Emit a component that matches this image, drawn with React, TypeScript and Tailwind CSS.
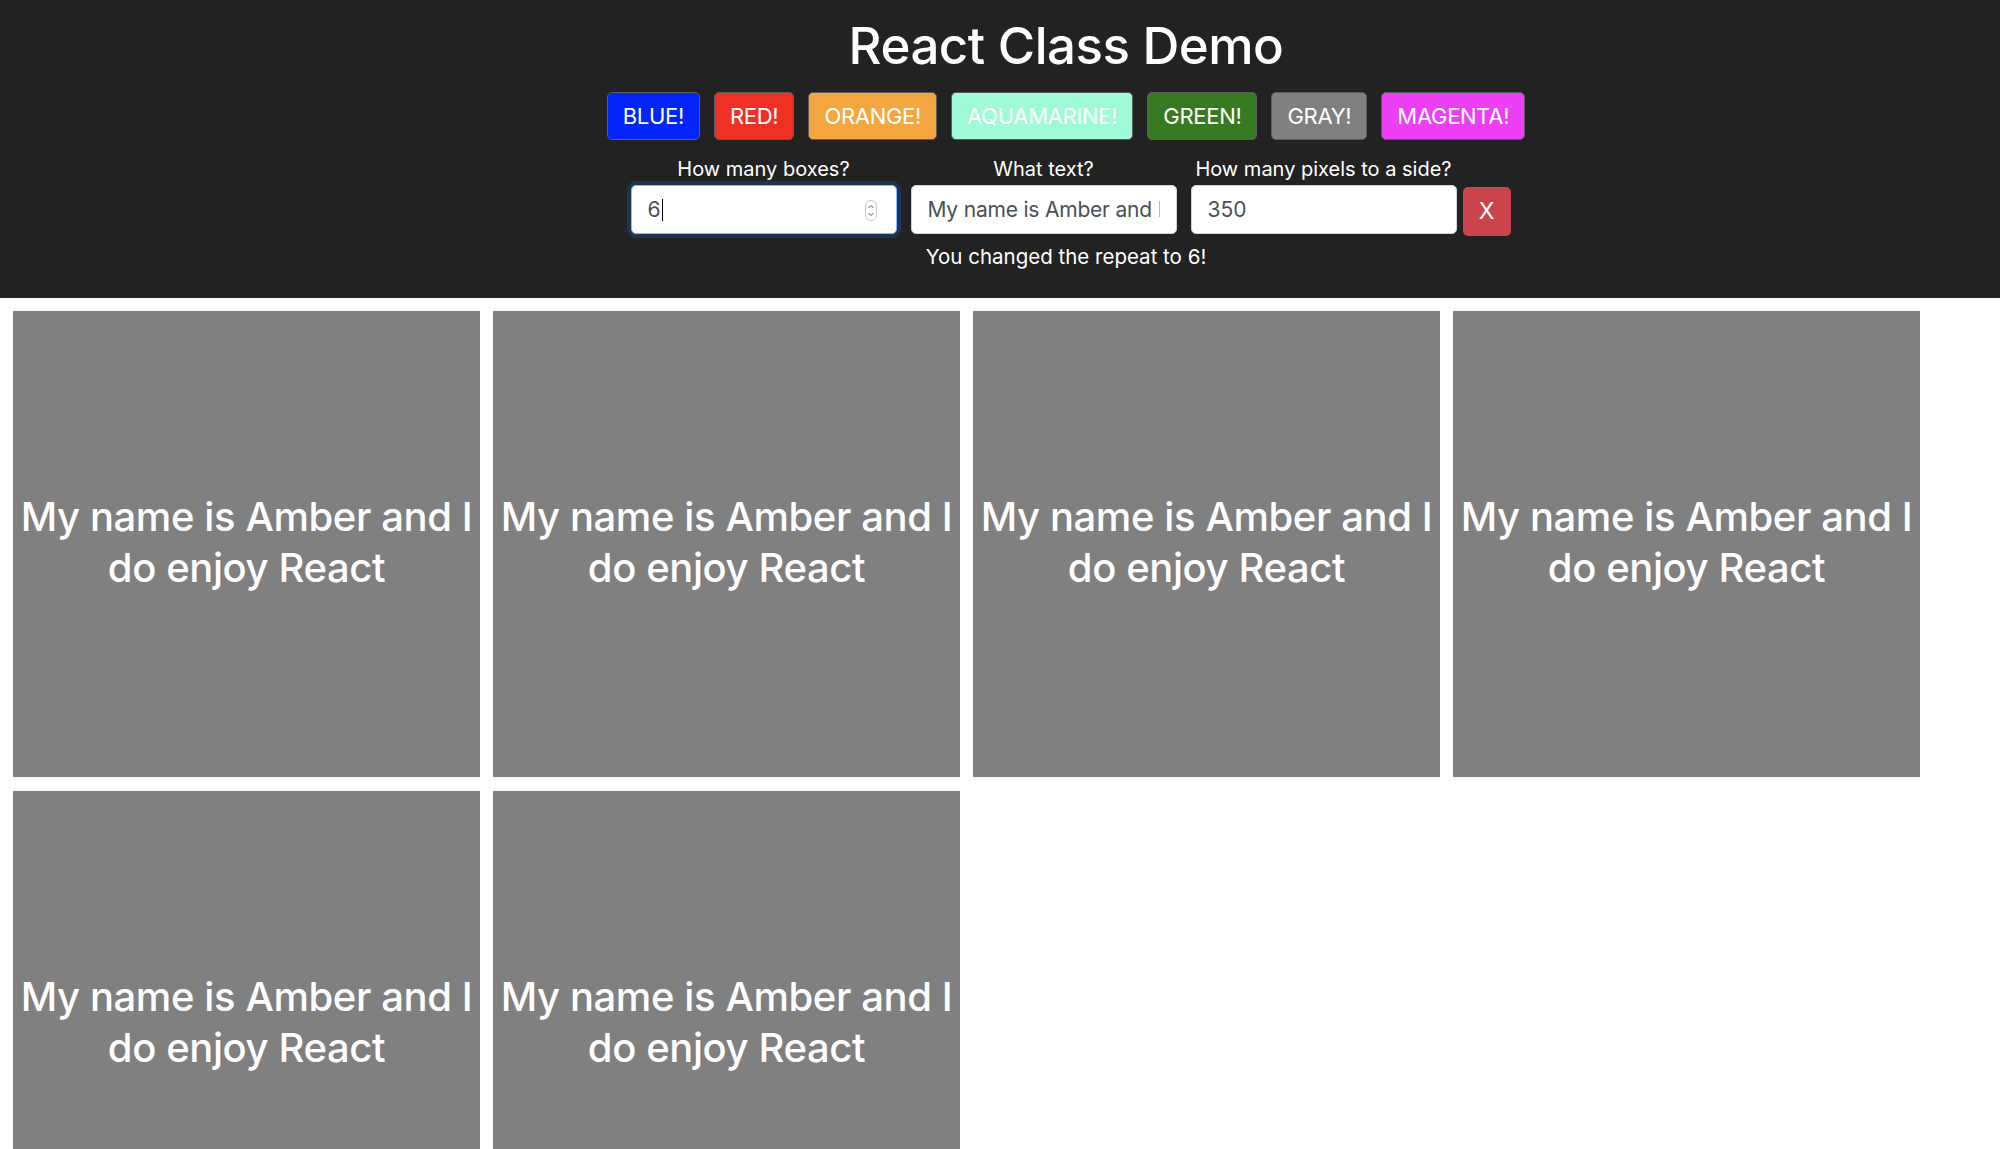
import React from "react";

const buttons = [
  { label: "BLUE!", cls: "bg-[#0324fb]" },
  { label: "RED!", cls: "bg-[#ee3124]" },
  { label: "ORANGE!", cls: "bg-[#f4a63f]" },
  { label: "AQUAMARINE!", cls: "bg-[#9ffbd7]" },
  { label: "GREEN!", cls: "bg-[#387a22]" },
  { label: "GRAY!", cls: "bg-[#808080]" },
  { label: "MAGENTA!", cls: "bg-[#eb3ef5]" },
];

const TEXT = "My name is Amber and I do enjoy React";

function Spinner() {
  return (
    <svg width="12" height="21" viewBox="0 0 12 21" className="absolute right-[19px] top-[14px]">
      <rect x="0.5" y="0.5" width="11" height="20" rx="5.5" fill="#fff" stroke="#c8c8c8" />
      <path d="M3.5 8 L6 5.5 L8.5 8" fill="none" stroke="#555" strokeWidth="1" />
      <path d="M3.5 13 L6 15.5 L8.5 13" fill="none" stroke="#555" strokeWidth="1" />
    </svg>
  );
}

export default function App() {
  return (
    <div className="min-h-screen bg-white font-['Inter',sans-serif]">
      <header className="bg-[#222222] pl-[132px] pt-[15px] pb-[29px] text-center text-white">
        <h1 className="text-[51px] leading-[62px] font-medium tracking-[-0.5px]">React Class Demo</h1>
        <div className="mt-[15px] flex justify-center gap-[14px]">
          {buttons.map((b) => (
            <button
              key={b.label}
              className={`${b.cls} h-[48px] rounded-[5px] border border-[#5c5c5c] px-[15px] text-[22px] leading-[27px] tracking-[-0.3px] text-white`}
            >
              {b.label}
            </button>
          ))}
        </div>
        <div className="mt-[17px] flex items-end justify-center gap-[14px] pl-[9px]">
          <div className="flex w-[266px] flex-col items-center">
            <label className="text-[20px] leading-[25px] whitespace-nowrap">How many boxes?</label>
            <div className="relative mt-[3px] flex h-[49px] w-[266px] items-center rounded-[5px] border border-[#80bdff] bg-white pl-[16px] text-left text-[21px] text-[#495057] shadow-[0_0_0_4px_#1d3553]">
              <span>6</span>
              <span className="ml-[1px] inline-block h-[22px] w-[1px] bg-black" />
              <Spinner />
            </div>
          </div>
          <div className="flex w-[266px] flex-col items-center">
            <label className="text-[20px] leading-[25px] whitespace-nowrap">What text?</label>
            <input
              readOnly
              value={TEXT}
              className="mt-[3px] h-[49px] w-[266px] rounded-[5px] border border-[#ced4da] bg-white px-[16px] text-[21px] tracking-[-0.2px] text-[#495057] outline-none"
            />
          </div>
          <div className="flex w-[266px] flex-col items-center">
            <label className="text-[20px] leading-[25px] whitespace-nowrap">How many pixels to a side?</label>
            <input
              readOnly
              value="350"
              className="mt-[3px] h-[49px] w-[266px] rounded-[5px] border border-[#ced4da] bg-white px-[16px] text-[21px] text-[#495057] outline-none"
            />
          </div>
          <button className="-ml-[8px] mb-[-2px] h-[49px] w-[48px] rounded-[5px] bg-[#cb434b] text-[23px] text-white">
            X
          </button>
        </div>
        <p className="mt-[10px] text-[20.5px] leading-[25px]">You changed the repeat to 6!</p>
      </header>
      <main className="flex flex-wrap gap-x-[13px] gap-y-[14px] pl-[13px] pt-[13px]">
        {Array.from({ length: 6 }).map((_, i) => (
          <div
            key={i}
            className="flex h-[466px] w-[467px] items-center justify-center bg-[#808080] pb-[4px] text-center text-[40px] leading-[51px] font-medium tracking-[-0.4px] text-white"
          >
            {TEXT}
          </div>
        ))}
      </main>
    </div>
  );
}
